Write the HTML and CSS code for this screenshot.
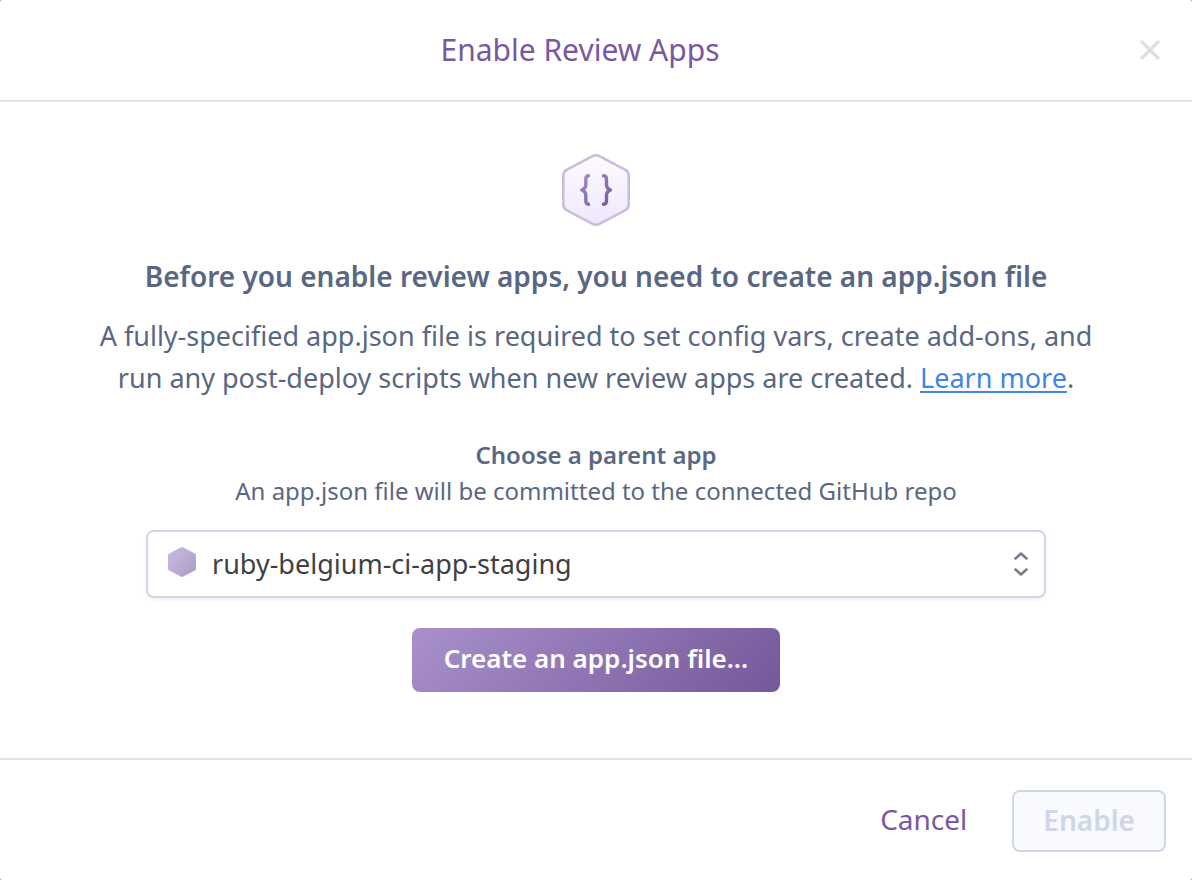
FILE: index.html
```html
<!DOCTYPE html>
<html lang="en">
<head>
<meta charset="utf-8">
<meta name="viewport" content="width=device-width, initial-scale=1">
<title>Enable Review Apps</title>
<link rel="stylesheet" href="styles.css">
</head>
<body>
<main class="modal" role="dialog" aria-labelledby="modal-title">
  <header class="modal-header">
    <h1 class="modal-title" id="modal-title">Enable Review Apps</h1>
    <button class="close" type="button" aria-label="Close">
      <svg width="20" height="20" viewBox="0 0 20 20" fill="none" stroke="currentColor" stroke-width="3.500" stroke-linecap="round"><path d="M2 2l16 16M18 2L2 18"/></svg>
    </button>
  </header>

  <section class="modal-body">
    <svg class="hero" width="68" height="72" viewBox="0 0 68 72" fill="none" aria-hidden="true">
      <defs>
        <linearGradient id="hex-fill" x1="0" y1="0" x2="0" y2="1"><stop stop-color="#fdfcff"/><stop offset="1" stop-color="#efe7fc"/></linearGradient>
        <linearGradient id="brace" gradientUnits="userSpaceOnUse" x1="18" y1="20" x2="50" y2="52"><stop stop-color="#a58bc8"/><stop offset="1" stop-color="#765a9e"/></linearGradient>
      </defs>
      <path d="M30.500 2.200Q34 0.400 37.500 2.200L63 15.600Q66.700 17.700 66.700 21.500V50.500Q66.700 54.300 63 56.400L37.500 69.800Q34 71.600 30.500 69.800L5 56.400Q1.300 54.300 1.300 50.500V21.500Q1.300 17.700 5 15.600Z" fill="url(#hex-fill)" stroke="#c9bedd" stroke-width="2.600"/>
      <g stroke="url(#brace)" stroke-width="3.400" stroke-linecap="round" stroke-linejoin="round">
        <path d="M26.500 21.700Q23.800 22 23.800 25.500V31Q23.800 34.500 19.700 36Q23.800 37.500 23.800 41V46.500Q23.800 50 26.500 50.300"/>
        <path d="M41.500 21.700Q44.500 22 44.500 25.500V31Q44.500 34.500 48.500 36Q44.500 37.500 44.500 41V46.500Q44.500 50 41.500 50.300"/>
      </g>
    </svg>
    <h2 class="heading">Before you enable review apps, you need to create an app.json file</h2>
    <p class="intro">A fully-specified app.json file is required to set config vars, create add-ons, and run any post-deploy scripts when new review apps are created. <a class="link" href="#">Learn more</a>.</p>
    <label class="field-label" for="parent-app">Choose a parent app</label>
    <p class="hint" id="parent-hint">An app.json file will be committed to the connected GitHub repo</p>
    <div class="select-wrap">
      <svg class="app-icon" width="28" height="30" viewBox="0 0 28 30" aria-hidden="true">
        <defs><linearGradient id="app-fill" x1="0" y1="0" x2="1" y2="1"><stop stop-color="#cbbddf"/><stop offset="1" stop-color="#ab9bc6"/></linearGradient></defs>
        <path d="M12.700 .4Q14-.3 15.300 .4L26.800 6.600Q28 7.300 28 8.600V21.400Q28 22.700 26.800 23.400L15.300 29.600Q14 30.300 12.700 29.600L1.200 23.400Q0 22.700 0 21.400V8.600Q0 7.300 1.200 6.600Z" fill="url(#app-fill)"/>
      </svg>
      <select class="select" id="parent-app" aria-describedby="parent-hint"><option>ruby-belgium-ci-app-staging</option></select>
      <svg class="arrows" width="14" height="24" viewBox="0 0 14 24" fill="none" stroke="#7f7b8f" stroke-width="2.600" stroke-linecap="round" stroke-linejoin="round" aria-hidden="true"><path d="M1.500 6.500L7 1.500L12.500 6.500M1.500 17.500L7 22.500L12.500 17.500"/></svg>
    </div>
    <button class="primary" type="button">Create an app.json file...</button>
  </section>

  <footer class="modal-footer">
    <button class="cancel" type="button">Cancel</button>
    <button class="enable" type="button" disabled>Enable</button>
  </footer>
</main>
</body>
</html>
```
FILE: styles.css
```css
* { box-sizing: border-box; }

body {
  margin: 0;
  background: #8b93a7;
  color: #5a6782;
  font-family: "Noto Sans", sans-serif;
}

button { font: inherit; cursor: pointer; }

.modal {
  display: flex;
  flex-direction: column;
  min-height: 100vh;
  background: #fff;
  border-radius: 2px;
}

.modal-header {
  display: flex;
  align-items: center;
  padding: 30px 32px 30px 20px;
  border-bottom: 2px solid #e3e3e5;
}

.modal-title {
  flex: 1;
  margin: 0;
  color: #79589f;
  font-size: 30px;
  font-weight: 400;
  line-height: 40px;
  text-align: center;
}

.close {
  display: flex;
  padding: 0;
  border: 0;
  background: none;
  color: #dde0e6;
}

.modal-body {
  display: flex;
  flex: 1;
  flex-direction: column;
  align-items: center;
  padding: 52px 80px;
  text-align: center;
}

.heading {
  margin: 29px 0 18px;
  font-size: 28px;
  font-weight: 600;
  line-height: 42px;
}

.intro {
  max-width: 1032px;
  margin: 0 0 38px;
  font-size: 27px;
  line-height: 42px;
}

.link { color: #3f85e5; text-underline-offset: 3px; text-decoration-thickness: 2px; }

.field-label {
  font-size: 24px;
  font-weight: 600;
  line-height: 36px;
}

.hint {
  margin: 0 0 21px;
  font-size: 24px;
  line-height: 36px;
}

.select-wrap {
  position: relative;
  width: 100%;
  max-width: 900px;
}

.select {
  display: block;
  width: 100%;
  height: 68px;
  padding: 0 64px 2px;
  border: 2px solid #cfd7e6;
  border-radius: 8px;
  background: #fff;
  box-shadow: 0 2px 4px rgba(0, 0, 0, 0.06);
  color: #3f3f44;
  font: inherit;
  font-size: 27px;
  appearance: none;
}

.app-icon,
.arrows {
  position: absolute;
  pointer-events: none;
}

.app-icon { top: 17px; left: 22px; }
.arrows { top: 22px; right: 18px; }

.primary {
  margin-top: 30px;
  padding: 0 32px 4px;
  border: 0;
  border-radius: 8px;
  background: linear-gradient(135deg, #a991cb, #74589a);
  color: #fff;
  font-size: 26px;
  font-weight: 600;
  line-height: 60px;
}

.modal-footer {
  display: flex;
  align-items: center;
  justify-content: flex-end;
  gap: 45px;
  padding: 30px 26px 28px;
  border-top: 2px solid #e3e3e5;
}

.cancel {
  padding: 0 0 4px;
  border: 0;
  background: none;
  color: #79589f;
  font-size: 28px;
}

.enable {
  padding: 0 29px 2px;
  border: 2px solid #cfd7e6;
  border-radius: 8px;
  background: #f9fafd;
  color: #cfd7e6;
  font-size: 28px;
  font-weight: 600;
  line-height: 56px;
  cursor: default;
}
```
